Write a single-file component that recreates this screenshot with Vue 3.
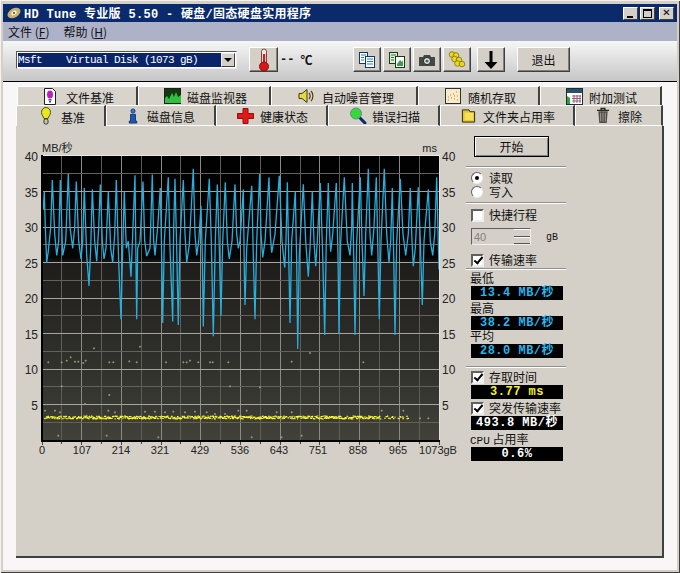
<script setup>
const X0 = 42, X1 = 439, Y40 = 157, PX = 7.1
const yOf = v => Y40 + (40 - v) * PX

const diskName = 'Msft    Virtual Disk (1073 gB)'

// curve traced from the reference, in [crop x, MB/s] pairs
const traceA = [[70,32.5],[73,35],[76,30],[80,25],[85,26.6],[92,30],[97,36.6],[104,29],[110,26],[116,28],[121,36.6],[128,26],[137,28],[145,37.5],[150,30],[158,27],[164,30],[169,36.4],[176,28],[183,25.5],[188,28],[193,35.5],[200,26],[207,21.7],[212,27],[217,35.3],[224,28],[230,25.2],[236,30],[241,36],[247,28],[252,25.5],[258,27],[265,35],[272,27],[278,25],[284,29],[289,36.6],[296,25],[303,17],[308,27],[313,35],[319,27],[325,28],[333,23],[338,29],[345,37.3],[348,25],[350,17],[353,27],[360,28],[369,36.4],[374,28],[380,25.9],[390,27],[397,37.4],[401,28],[405,26],[413,30],[421,35.5],[425,26],[428,16.5],[433,28],[445,37],[450,27],[458,16.7],[461,30],[465,36.8],[470,27],[475,16.2],[480,28],[490,36.6],[495,29],[500,25],[508,27.5],[520,38.2],[525,29],[530,26],[536,28],[543,33],[547,26],[550,16],[556,28],[568,36.8],[574,28],[580,14.6],[586,28],[592,36],[598,27],[603,17.5],[608,28],[616,36.3],[622,28],[628,25.5],[636,28],[645,36],[650,29],[655,27]]
const traceB = [[0,28],[10,35.3],[13,24],[15,19],[20,27],[35,35.8],[40,26],[45,17],[50,28],[59,37.5],[63,29],[68,25.7],[75,28],[87,37],[91,29],[95,26.4],[105,29],[118,37.2],[126,28],[134,24.3],[138,28],[142,36.3],[146,26],[150,16.5],[155,28],[166,35],[170,25],[173,12.8],[178,26],[190,36],[197,28],[205,23],[210,27],[217,35],[222,28],[227,24.5],[232,28],[241,36.2],[248,26],[254,14.8],[259,28],[265,36.2],[269,29],[272,26.5],[278,29],[289,36.2],[294,26],[297,15],[302,28],[313,37],[322,28],[330,26],[335,30],[337,36.2],[341,26],[345,14.8],[350,28],[361,37],[366,28],[372,20.3],[377,29],[385,38.2],[390,29],[395,26],[402,30],[409,37],[414,26],[418,17],[423,28],[433,38.2],[440,29],[447,25],[452,28],[457,35.5],[461,26],[465,14.8],[470,28],[481,36.8],[489,29],[497,26],[505,29],[511,35.5],[516,28],[520,24.5],[526,27],[535,35.6],[541,28],[547,19],[552,28],[565,35.3],[571,28],[578,26],[584,29],[590,37],[597,24]]
const linePts = [
  ...traceA.map(p => [20 + p[0] / 3, p[1]]),
  ...traceB.map(p => [240 + p[0] / 3, p[1]])
].map(p => `${p[0].toFixed(1)},${yOf(p[1]).toFixed(1)}`).join(' ')

const vx = Array.from({ length: 21 }, (_, i) => X0 + (i * (X1 - X0)) / 20)
const hy = Array.from({ length: 15 }, (_, i) => yOf(37.5 - i * 2.5))
const xLabels = [['0',42],['107',82],['214',121],['321',160],['429',200],['536',240],['643',279],['751',318],['858',358],['965',398],['1073gB',438]]
const yLabels = [40,35,30,25,20,15,10,5]

const d1 = [[85,160],[125,160],[140,155],[152,145],[165,158],[175,158],[190,162],[197,155],[222,118],[125,232],[268,258],[268,160],[280,160],[328,157],[350,160],[360,113],[438,160],[490,160],[500,160],[510,155],[535,160],[570,160],[578,160],[625,160],[630,232],[75,305],[105,305],[120,310],[195,285],[200,320],[265,305],[285,310],[375,308],[405,308],[435,310],[460,308],[495,310],[525,308],[560,310],[585,315],[615,315],[655,305],[115,380],[260,380],[415,385]]
const d2 = [[60,235],[155,158],[210,132],[370,160],[20,305],[110,310],[155,310],[425,305],[490,305],[35,385],[125,385],[185,380],[540,328],[565,328],[465,325],[490,325]]
const dots = [
  ...d1.map(p => [20 + p[0] / 3, 310 + p[1] / 3]),
  ...d2.map(p => [240 + p[0] / 3, 310 + p[1] / 3])
].map(p => `M${(p[0] - 1).toFixed(1)} ${p[1].toFixed(1)}h2M${p[0].toFixed(1)} ${(p[1] - 1).toFixed(1)}v2`).join('')

let seed = 7
const rnd = () => (seed = (seed * 16807) % 2147483647) / 2147483647
const band = []
for (let x = 44; x < 408; x += 0.5) {
  const keep = x < 380 ? 0.9 : 0.35
  if (rnd() < keep) band.push(`M${x.toFixed(1)} ${(417 + rnd() * 3).toFixed(1)}h${(1 + rnd()).toFixed(1)}`)
}
const bandPath = band.join('')

const row1 = [
  { t: '文件基准', w: 121, ic: 'page', pad: 24, gap: 8 },
  { t: '磁盘监视器', w: 133, ic: 'mon', pad: 25, gap: 6 },
  { t: '自动噪音管理', w: 147, ic: 'spk', pad: 26, gap: 7 },
  { t: '随机存取', w: 122, ic: 'rnd', pad: 26, gap: 7 },
  { t: '附加测试', w: 122, ic: 'cal', pad: 25, gap: 6 }
]
const row2 = [
  { t: '基准', w: 90, ic: 'bulb', pad: 24, gap: 10, on: true },
  { t: '磁盘信息', w: 110, ic: 'info', pad: 21, gap: 9 },
  { t: '健康状态', w: 112, ic: 'plus', pad: 20, gap: 6 },
  { t: '错误扫描', w: 112, ic: 'glass', pad: 20, gap: 5 },
  { t: '文件夹占用率', w: 135, ic: 'fold', pad: 20, gap: 7 },
  { t: '擦除', w: 88, ic: 'trash', pad: 20, gap: 8 }
]
</script>

<template>
  <div class="win">
    <div class="title">
      <svg class="appicon" width="16" height="16" viewBox="0 0 16 16">
        <ellipse cx="8" cy="8" rx="7" ry="4.500" transform="rotate(-30 8 8)" fill="#c8b070" />
        <ellipse cx="8" cy="8" rx="3" ry="2" transform="rotate(-30 8 8)" fill="#f4ecd0" />
        <circle cx="8" cy="8" r="1" fill="#604810" />
      </svg>
      <span class="title-text">HD Tune 专业版 5.50 - 硬盘/固态硬盘实用程序</span>
      <div class="caps">
        <button class="cap"><span class="cap-min"></span></button>
        <button class="cap"><span class="cap-max"></span></button>
        <button class="cap cap-x">✕</button>
      </div>
    </div>

    <div class="menu">
      <span class="menu-item">文件 (<u>F</u>)</span>
      <span class="menu-item">帮助 (<u>H</u>)</span>
    </div>

    <div class="toolbar">
      <div class="combo">
        <div class="combo-val">{{ diskName }}</div>
        <div class="combo-arrow"><i></i></div>
      </div>
      <button class="tbtn temp">
        <svg width="14" height="24" viewBox="0 0 14 24">
          <rect x="4.500" y="1" width="5" height="16" rx="2.500" fill="#f4e8e0" stroke="#804040" />
          <rect x="6" y="6" width="2.200" height="11" fill="#d81818" />
          <circle cx="7" cy="18.500" r="4.500" fill="#d81818" stroke="#801010" />
        </svg>
      </button>
      <span class="temp-val"><span class="dash">--</span><span class="deg">℃</span></span>
      <button class="tbtn">
        <svg width="18" height="18" viewBox="0 0 18 18">
          <rect x="1.500" y="1.500" width="8" height="11" fill="#fff" stroke="#103868" />
          <rect x="7.500" y="5.500" width="9" height="11" fill="#fff" stroke="#103868" />
          <path d="M3 4h5M3 6.500h3M3 9h3" stroke="#2878c0" />
          <path d="M9 8h6M9 10.500h6M9 13h6" stroke="#2878c0" />
        </svg>
      </button>
      <button class="tbtn">
        <svg width="18" height="18" viewBox="0 0 18 18">
          <rect x="1.500" y="1.500" width="8" height="11" fill="#dcecd8" stroke="#183818" />
          <rect x="7.500" y="5.500" width="9" height="11" fill="#fff" stroke="#183818" />
          <path d="M3 4h5M3 6.500h3M3 9h3" stroke="#287838" />
          <path d="M9 13l3-4 2 2 1-2v6H9z" fill="#38a048" />
        </svg>
      </button>
      <button class="tbtn">
        <svg width="18" height="16" viewBox="0 0 18 16">
          <path d="M1 5h4l1-2h6l1 2h4v9H1z" fill="#404848" />
          <circle cx="9" cy="9" r="3.500" fill="#e8f0e8" stroke="#202020" />
          <circle cx="9" cy="9" r="1.600" fill="#506060" />
        </svg>
      </button>
      <button class="tbtn">
        <svg width="20" height="20" viewBox="0 0 20 20">
          <g fill="#e8d820" stroke="#807010" stroke-width=".8">
            <circle cx="5" cy="4.500" r="2.800" />
            <circle cx="9" cy="5.500" r="2.800" />
            <circle cx="7.500" cy="9" r="2.800" />
            <circle cx="12" cy="10" r="2.800" />
            <circle cx="10.500" cy="13.500" r="2.800" />
            <circle cx="15" cy="14" r="2.800" />
          </g>
        </svg>
      </button>
      <button class="tbtn t5">
        <svg width="16" height="20" viewBox="0 0 16 20">
          <path d="M6.500 1h3v11h5L8 19 1.500 12h5z" fill="#000" />
        </svg>
      </button>
      <button class="tbtn exit">退出</button>
    </div>

    <div class="client">
      <div class="tabs">
        <div class="tabrow row1">
          <div v-for="t in row1" :key="t.t" class="tab" :style="{ width: t.w + 'px', paddingLeft: t.pad + 'px', gap: t.gap + 'px' }">
            <svg v-if="t.ic === 'page'" width="16" height="17" viewBox="0 0 16 17">
              <path d="M2.500 .5h8l3 3v13h-11z" fill="#fff" stroke="#202020" />
              <ellipse cx="8" cy="6.500" rx="3" ry="4" fill="#c01cc0" />
              <rect x="6.500" y="11" width="3" height="1.500" fill="#505050" />
              <rect x="7" y="13" width="2" height="1.500" fill="#505050" />
            </svg>
            <svg v-else-if="t.ic === 'mon'" width="17" height="16" viewBox="0 0 17 16">
              <rect x=".5" y=".5" width="16" height="15" fill="#143810" stroke="#202020" />
              <path d="M1 15V10l2-2 2 3 3-6 2 4 2-5 2 5 3-2v8z" fill="#30c040" />
            </svg>
            <svg v-else-if="t.ic === 'spk'" width="17" height="16" viewBox="0 0 17 16">
              <path d="M1 5.500h3L9 1.500v13l-5-4H1z" fill="#e8d840" stroke="#403810" />
              <path d="M11 5c1.500 1.500 1.500 4.500 0 6M13 3c2.500 2.500 2.500 7.500 0 10" fill="none" stroke="#504010" stroke-width="1.200" />
            </svg>
            <svg v-else-if="t.ic === 'rnd'" width="16" height="16" viewBox="0 0 16 16">
              <rect x=".5" y=".5" width="15" height="15" fill="#f8ecc8" stroke="#303030" />
              <path d="M3 12h1M6 10h1M9 11h1M12 8h1M5 7h1M8 6h1M11 4h1M12 12h1M3 9h1M9 8h1" stroke="#c08030" />
            </svg>
            <svg v-else-if="t.ic === 'cal'" width="17" height="17" viewBox="0 0 17 17">
              <rect x=".5" y=".5" width="16" height="16" fill="#fff" stroke="#203030" />
              <path d="M1 1h15v4H1z" fill="#285068" />
              <path d="M1 16V8l3 2v6z" fill="#30a048" />
              <path d="M6 8h9M6 10.500h9M6 13h9M8 7v8M11 7v8M14 7v8" stroke="#804060" stroke-width=".8" />
            </svg>
            <span class="tlabel">{{ t.t }}</span>
          </div>
        </div>
        <div class="tabrow row2">
          <div v-for="t in row2" :key="t.t" class="tab" :class="{ on: t.on }" :style="{ width: t.w + 'px', paddingLeft: t.pad + 'px', gap: t.gap + 'px' }">
            <svg v-if="t.ic === 'bulb'" width="10" height="19" viewBox="0 0 10 19">
              <path d="M5 .5c3 0 4.500 2.500 4.500 5 0 2.500-2 4-2.500 6H3c-.5-2-2.500-3.500-2.500-6C.5 3 2 .5 5 .5z" fill="#e6e820" stroke="#505010" />
              <rect x="3" y="12" width="4" height="5" rx="1.500" fill="#c8c8a0" stroke="#303030" />
            </svg>
            <svg v-else-if="t.ic === 'info'" width="10" height="18" viewBox="0 0 12 18">
              <circle cx="6" cy="3" r="2.500" fill="#3878d8" stroke="#103060" />
              <path d="M3 7h6v8h1.500v2.500h-9V15H3z" fill="#1858b8" stroke="#103060" />
            </svg>
            <svg v-else-if="t.ic === 'plus'" width="17" height="16" viewBox="0 0 17 16">
              <path d="M6 .5h5v5h5.500v5H11v5H6v-5H.5v-5H6z" fill="#e01818" stroke="#901010" />
            </svg>
            <svg v-else-if="t.ic === 'glass'" width="18" height="17" viewBox="0 0 18 17">
              <path d="M10 10l6 6" stroke="#102868" stroke-width="3" stroke-linecap="round" />
              <circle cx="7" cy="6.500" r="5.500" fill="#38d838" stroke="#6088a0" />
            </svg>
            <svg v-else-if="t.ic === 'fold'" width="15" height="17" viewBox="0 0 16 17">
              <path d="M1.500 2.500h7l1 2h5v11h-13z" fill="#e8c820" stroke="#282010" />
              <rect x="4" y="5.500" width="9" height="8" fill="#f4e060" />
            </svg>
            <svg v-else-if="t.ic === 'trash'" width="14" height="17" viewBox="0 0 15 17">
              <path d="M1 3h13M5.500 3V1h4v2" stroke="#282828" stroke-width="1.500" fill="none" />
              <path d="M2.500 4h10l-1 12.500h-8z" fill="#504c44" />
              <path d="M5 5.500v9.500M7.500 5.500v9.500M10 5.500v9.500" stroke="#a8a498" />
            </svg>
            <span class="tlabel">{{ t.t }}</span>
          </div>
        </div>
      </div>

      <div class="panel">
        <svg class="chart" width="447" height="320" viewBox="16 142 447 320">
          <defs>
            <linearGradient id="plotbg" x1="0" y1="0" x2="0" y2="1">
              <stop offset="0" stop-color="#000" />
              <stop offset=".36" stop-color="#050505" />
              <stop offset=".38" stop-color="#1f1d1b" />
              <stop offset=".65" stop-color="#2c2c28" />
              <stop offset=".9" stop-color="#3a3a34" />
              <stop offset="1" stop-color="#42423a" />
            </linearGradient>
            <clipPath id="plotclip"><rect x="43" y="157" width="396" height="284" /></clipPath>
          </defs>
          <rect x="42" y="156" width="397" height="285" fill="url(#plotbg)" />
          <line v-for="(x, i) in vx" :key="'v' + i" :x1="x" :x2="x" y1="157" y2="441" :stroke="i % 2 ? '#5e5e58' : '#8a8a84'" shape-rendering="crispEdges" />
          <line v-for="(y, i) in hy" :key="'h' + i" x1="42" x2="439" :y1="y" :y2="y" :stroke="i % 2 ? '#a4a4a0' : '#62625c'" shape-rendering="crispEdges" />
          <rect x="42" y="156" width="398" height="1" fill="#e8e8e4" />
          <rect x="439" y="156" width="1" height="286" fill="#e0e0dc" />
          <rect x="41" y="156" width="2" height="287" fill="#000" />
          <rect x="41" y="441" width="399" height="2" fill="#000" />
          <path v-for="(x, i) in vx" :key="'t' + i" :d="`M${x} 443v${i % 2 ? 2 : 3}`" stroke="#404040" shape-rendering="crispEdges" />
          <g clip-path="url(#plotclip)">
            <polyline :points="linePts" fill="none" stroke="#28aedd" stroke-width="1.300" stroke-linejoin="bevel" />
            <path :d="dots" stroke="#a8a680" stroke-width=".8" fill="none" />
            <path :d="bandPath" stroke="#fbfb28" stroke-width="1.100" fill="none" />
          </g>
          <text class="ax" x="42" y="153">MB/秒</text>
          <text class="ax" x="437" y="153" text-anchor="end">ms</text>
          <g v-for="v in yLabels" :key="v">
            <text class="num" x="38" :y="yOf(v) + 5" text-anchor="end">{{ v }}</text>
            <text class="num" x="442" :y="yOf(v) + 5">{{ v }}</text>
          </g>
          <text v-for="l in xLabels" :key="l[0]" class="ax" :x="l[1]" y="455" text-anchor="middle">{{ l[0] }}</text>
        </svg>

        <div class="side">
          <button class="start">开始</button>
          <hr class="sep s1" />
          <label class="opt o1"><span class="radio on"></span>读取</label>
          <label class="opt"><span class="radio"></span>写入</label>
          <hr class="sep s2" />
          <label class="opt o3"><span class="check"></span>快捷行程</label>
          <div class="spinrow">
            <div class="spin"><span>40</span><div class="spin-btns"><i></i><i></i></div></div>
            <span class="gb">gB</span>
          </div>
          <label class="opt o4"><span class="check ticked"></span>传输速率</label>
          <hr class="sep s3" />
          <div class="lbl l1">最低</div>
          <div class="read blue">13.4 MB/秒</div>
          <div class="lbl l2">最高</div>
          <div class="read blue">38.2 MB/秒</div>
          <div class="lbl l3">平均</div>
          <div class="read blue">28.0 MB/秒</div>
          <hr class="sep s4" />
          <label class="opt o5"><span class="check ticked"></span>存取时间</label>
          <div class="read yellow">3.77 ms</div>
          <label class="opt o6"><span class="check ticked"></span>突发传输速率</label>
          <div class="read white">493.8 MB/秒</div>
          <div class="lbl l4"><span class="mono">CPU</span> 占用率</div>
          <div class="read white">0.6%</div>
        </div>
      </div>
    </div>
  </div>
</template>

<style>
html, body { margin: 0; background: #d4d0c8; }
</style>

<style scoped>
.win {
  width: 680px;
  height: 573px;
  box-sizing: border-box;
  padding: 4px 3px 3px;
  background: #d4d0c8;
  box-shadow: inset 1px 1px 0 #f4f2ee, inset -1px -1px 0 #404040;
  display: flex;
  flex-direction: column;
  font: 12px "Noto Sans CJK SC", "Liberation Sans", sans-serif;
  color: #111;
  overflow: hidden;
}
.title {
  height: 18px;
  flex: none;
  background: #0a2a6c;
  display: flex;
  align-items: center;
  padding-left: 3px;
  color: #fff;
}
.appicon { margin-right: 2px; }
.title-text {
  font: bold 12px "Liberation Mono", "Noto Sans CJK SC", monospace;
  letter-spacing: .3px;
  white-space: pre;
}
.caps { margin-left: auto; display: flex; gap: 2px; padding-right: 3px; }
.cap {
  width: 15px;
  height: 13px;
  padding: 0;
  background: #d4d0c8;
  border: 1px solid;
  border-color: #fff #404040 #404040 #fff;
  font: bold 10px "DejaVu Sans", sans-serif;
  line-height: 10px;
  color: #000;
  position: relative;
}
.cap-x { margin-left: 2px; }
.cap-min { position: absolute; left: 3px; bottom: 1px; width: 6px; height: 2px; background: #000; }
.cap-max { position: absolute; left: 2px; top: 1px; width: 7px; height: 6px; border: 1px solid #000; border-top-width: 2px; }
.menu {
  height: 19px;
  flex: none;
  background: #adb2c8;
  display: flex;
  align-items: center;
  gap: 14px;
  padding-left: 5px;
}
.toolbar {
  height: 41px;
  flex: none;
  box-sizing: border-box;
  padding: 6px 0 0 13px;
  background: linear-gradient(#f6f6f6, #c6c6c6);
  border-bottom: 1px solid #000;
  display: flex;
  align-items: flex-start;
}
.combo {
  width: 221px;
  height: 18px;
  margin-top: 4px;
  box-sizing: border-box;
  border: 1px solid;
  border-color: #555 #eee #eee #555;
  background: #fff;
  display: flex;
  padding: 1px;
}
.combo-val {
  width: 203px;
  background: #0a246a;
  color: #fff;
  font: 11px/14px "Liberation Mono", monospace;
  letter-spacing: -.6px;
  white-space: pre;
}
.combo-arrow {
  flex: 1;
  background: #d4d0c8;
  border: 1px solid;
  border-color: #eee #404040 #404040 #eee;
  display: flex;
  align-items: center;
  justify-content: center;
}
.combo-arrow i {
  border-left: 4px solid transparent;
  border-right: 4px solid transparent;
  border-top: 4px solid #000;
}
.tbtn {
  width: 28px;
  height: 25px;
  padding: 0;
  background: #d4d0c8;
  border: 1px solid;
  border-color: #fff #404040 #404040 #fff;
  box-shadow: inset -1px -1px 0 #808080;
  display: flex;
  align-items: center;
  justify-content: center;
  margin-left: 2px;
  font: 12px "Noto Sans CJK SC", sans-serif;
  color: #111;
}
.temp { width: 29px; margin-left: 12px; }
.temp-val {
  width: 71px;
  height: 25px;
  margin-left: 2px;
  display: flex;
  align-items: center;
  gap: 6px;
}
.dash { font: bold 12px "Liberation Mono", monospace; }
.deg { font: bold 12px "Noto Sans CJK SC", sans-serif; }
.t5 { margin-left: 6px; }
.exit { width: 53px; margin-left: 12px; }
.client {
  flex: 1;
  min-height: 0;
  background: #f8f6f7;
  padding: 4px 0 12px 13px;
  display: flex;
  flex-direction: column;
}
.tabs { flex: none; }
.tabrow { display: flex; }
.row1 { height: 19px; padding-left: 1px; }
.row2 { height: 21px; }
.tab {
  box-sizing: border-box;
  background: #d8d4cc;
  border-top: 1px solid #fff;
  border-left: 1px solid #fff;
  border-right: 2px solid #404040;
  display: flex;
  align-items: center;
  white-space: nowrap;
  font-size: 12px;
}
.row2 .tab { background: #d4d0c8; }
.row2 .tab:not(.on) { border-bottom: 1px solid #fff; }
.tlabel { color: #111; margin-top: 2px; }
.panel {
  flex: 1;
  min-height: 0;
  width: 648px;
  box-sizing: border-box;
  background: #d4d0c8;
  border-right: 2px solid #404040;
  border-bottom: 2px solid #404040;
  display: flex;
  align-items: flex-start;
}
.chart { display: block; flex: none; margin-top: 15px; }
.side {
  width: 101px;
  flex: none;
  margin-left: 3px;
}
.start {
  display: block;
  width: 75px;
  height: 21px;
  margin: 10px 0 0 8px;
  padding: 0;
  background: #d4d0c8;
  border: 1px solid #000;
  box-shadow: inset 1px 1px 0 #fff, inset -1px -1px 0 #808080;
  font: 12px "Noto Sans CJK SC", sans-serif;
  color: #111;
}
.sep {
  display: block;
  width: 100px;
  height: 0;
  margin: 0;
  border: 0;
  border-top: 1px solid #909090;
  border-bottom: 1px solid #fff;
}
.s1 { margin-top: 9px; }
.s2 { margin-top: 3px; }
.s3 { margin-top: 1px; }
.s4 { margin-top: 8px; }
.opt {
  display: flex;
  align-items: center;
  height: 14px;
  line-height: 14px;
  padding-left: 5px;
  gap: 5px;
  font-size: 12px;
}
.o1 { margin-top: 3px; }
.o3 { margin-top: 4px; }
.o4 { margin-top: 8px; }
.o5 { margin-top: 2px; }
.o6 { margin-top: 2px; }
.radio {
  width: 12px;
  height: 12px;
  margin-right: 1px;
  box-sizing: border-box;
  border-radius: 50%;
  border: 1px solid;
  border-color: #606060 #eee #eee #606060;
  background: #fff;
  position: relative;
}
.radio.on::after {
  content: "";
  position: absolute;
  left: 3px;
  top: 3px;
  width: 4px;
  height: 4px;
  border-radius: 50%;
  background: #000;
}
.check {
  width: 13px;
  height: 13px;
  box-sizing: border-box;
  border: 2px solid;
  border-color: #606060 #eee #eee #606060;
  background: #fff;
  position: relative;
}
.check.ticked::after {
  content: "";
  position: absolute;
  left: 2.500px;
  top: -.5px;
  width: 3px;
  height: 7px;
  border: solid #000;
  border-width: 0 2px 2px 0;
  transform: rotate(40deg);
}
.spinrow { display: flex; align-items: flex-start; margin-top: 6px; padding-left: 5px; }
.spin {
  width: 60px;
  height: 17px;
  box-sizing: border-box;
  border: 1px solid;
  border-color: #606060 #eee #eee #606060;
  background: #d4d0c8;
  display: flex;
  align-items: center;
  justify-content: space-between;
  padding-left: 2px;
  color: #808080;
  font: 11px "Liberation Sans", sans-serif;
}
.spin-btns { display: flex; flex-direction: column; width: 16px; height: 15px; }
.spin-btns i { flex: 1; background: #d4d0c8; border-top: 1px solid #fff; border-bottom: 1px solid #555; }
.gb { margin: 4px 0 0 15px; font: 10px "Liberation Mono", monospace; }
.lbl { height: 14px; line-height: 14px; padding-left: 4px; font-size: 12px; }
.mono { font: 11px "Liberation Mono", monospace; }
.l1 { margin-top: 1px; }
.l2 { margin-top: 1px; }
.l3 { margin-top: -1px; }
.l4 { margin-top: 2px; }
.read {
  width: 92px;
  height: 14px;
  margin: 1px 0 0 5px;
  background: #000;
  text-align: center;
  font: bold 12px/14px "Liberation Mono", "Noto Sans CJK SC", monospace;
  letter-spacing: .5px;
  white-space: pre;
}
.blue { color: #29b4ea; }
.yellow { color: #f4f428; }
.white { color: #fff; }
.ax { font: 11px "Liberation Sans", "Noto Sans CJK SC", sans-serif; fill: #222; }
.num { font: 12px "Liberation Sans", sans-serif; fill: #222; }
</style>
